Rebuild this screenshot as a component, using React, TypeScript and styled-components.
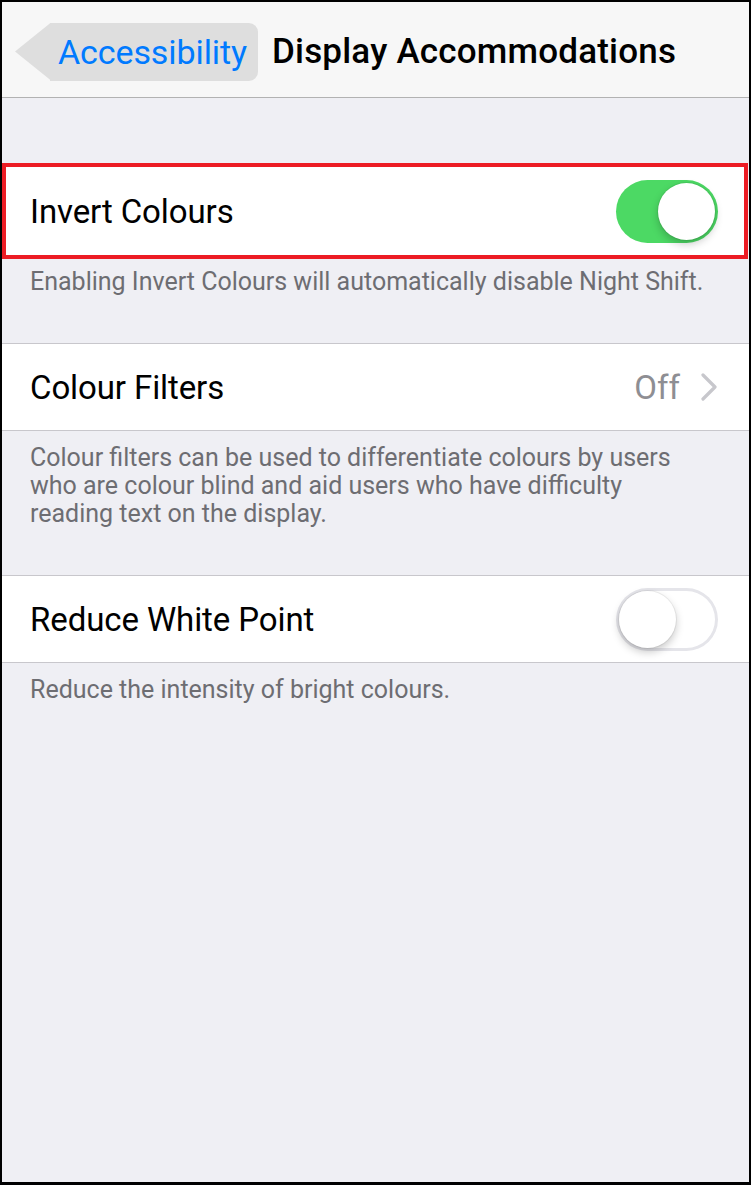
import React from 'react';
import styled, { createGlobalStyle, css } from 'styled-components';

const GlobalStyle = createGlobalStyle`
	html, body {
		margin: 0;
		padding: 0;
		background: #ffffff;
	}
	* {
		box-sizing: border-box;
	}
`;

const Frame = styled.div`
	width: 751px;
	height: 1185px;
	border: 2px solid #000000;
	border-bottom-width: 3px;
	background: #efeff4;
	display: flex;
	flex-direction: column;
	overflow: hidden;
	font-family: Roboto, 'Liberation Sans', sans-serif;
`;

const NavBar = styled.div`
	height: 96px;
	flex-shrink: 0;
	background: #f7f7f7;
	border-bottom: 1px solid #b2b2b2;
	display: flex;
	align-items: center;
	padding: 4px 0 0 13px;
`;

const BackButton = styled.div`
	position: relative;
	height: 58px;
	margin-left: 35px;
	padding: 0 11px 0 8px;
	display: flex;
	align-items: center;
	background: #dedede;
	border-radius: 0 9px 9px 0;
	color: #007aff;
	font-size: 34px;
	letter-spacing: -0.1px;

	&::before {
		content: '';
		position: absolute;
		left: -35px;
		top: 0;
		width: 36px;
		height: 58px;
		background: #dedede;
		clip-path: polygon(0 50%, 100% 0, 100% 100%);
	}
`;

const NavTitle = styled.div`
	margin-left: 14px;
	font-size: 35px;
	font-weight: 500;
	color: #000000;
	letter-spacing: 0.2px;
`;

const Content = styled.div`
	display: flex;
	flex-direction: column;
	padding-top: 69px;
`;

const Highlight = styled.div`
	margin: -4px 1px -4px 0;
	border: 4px solid #ec1c24;
	background: #ffffff;
`;

const Row = styled.div`
	height: 88px;
	background: #ffffff;
	border-top: 1px solid #c8c7cc;
	border-bottom: 1px solid #c8c7cc;
	display: flex;
	align-items: center;
	padding: 0 31px 0 28px;

	${Highlight} & {
		border-color: transparent;
		padding: 0 26px 0 24px;
	}
`;

const Label = styled.div`
	flex: 1;
	font-size: 33px;
	color: #000000;
	letter-spacing: -0.1px;
`;

const Detail = styled.div`
	font-size: 33px;
	color: #8e8e93;
	margin-right: 20px;
`;

const Footer = styled.div`
	padding: 13px 40px 47px 28px;
	font-size: 25px;
	line-height: 28px;
	color: #6d6d72;
`;

const Track = styled.div<{ $on: boolean }>`
	width: 102px;
	height: 63px;
	border-radius: 32px;
	display: flex;
	align-items: center;
	padding: 3px;
	${(p) =>
		p.$on
			? css`
					background: #4cd964;
					justify-content: flex-end;
			  `
			: css`
					background: #ffffff;
					box-shadow: inset 0 0 0 3px #e5e5ea;
					justify-content: flex-start;
			  `}
`;

const Knob = styled.div`
	width: 57px;
	height: 57px;
	border-radius: 50%;
	background: #ffffff;
	box-shadow: 0 0 0 1px rgba(0, 0, 0, 0.06), 0 4px 8px rgba(0, 0, 0, 0.22);
`;

const Switch = ({ on }: { on: boolean }) => (
	<Track $on={on}>
		<Knob />
	</Track>
);

const Chevron = () => (
	<svg width='18' height='28' viewBox='0 0 18 28'>
		<polyline points='3,2 15,14 3,26' fill='none' stroke='#c7c7cc' strokeWidth='3.2' strokeLinecap='round' strokeLinejoin='round' />
	</svg>
);

const App = () => {
	return (
		<Frame>
			<GlobalStyle />
			<NavBar>
				<BackButton>Accessibility</BackButton>
				<NavTitle>Display Accommodations</NavTitle>
			</NavBar>
			<Content>
				<Highlight>
					<Row>
						<Label>Invert Colours</Label>
						<Switch on />
					</Row>
				</Highlight>
				<Footer>Enabling Invert Colours will automatically disable Night Shift.</Footer>

				<Row>
					<Label>Colour Filters</Label>
					<Detail>Off</Detail>
					<Chevron />
				</Row>
				<Footer>Colour filters can be used to differentiate colours by users who are colour blind and aid users who have difficulty reading text on the display.</Footer>

				<Row>
					<Label>Reduce White Point</Label>
					<Switch on={false} />
				</Row>
				<Footer>Reduce the intensity of bright colours.</Footer>
			</Content>
		</Frame>
	);
};

export default App;
